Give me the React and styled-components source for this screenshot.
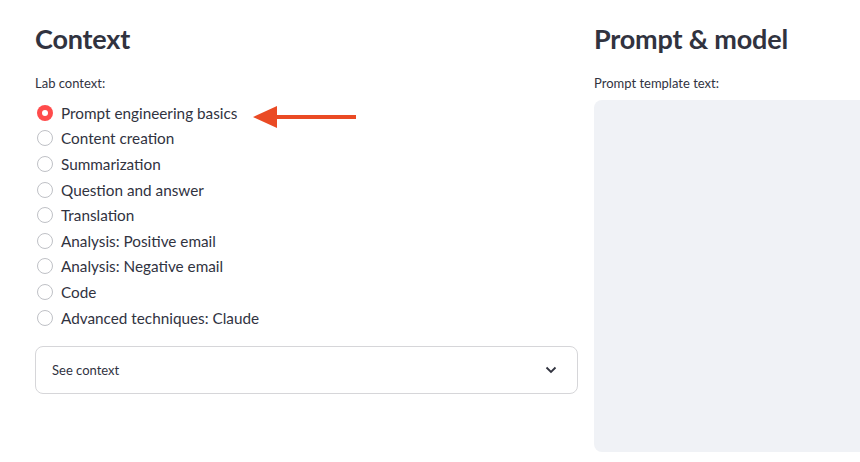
import styled, { createGlobalStyle } from 'styled-components';
import { useState } from 'react';

const GlobalStyle = createGlobalStyle`
  * {
    box-sizing: border-box;
  }
  body {
    margin: 0;
    background: #ffffff;
    font-family: Lato, 'Liberation Sans', sans-serif;
    color: #31333f;
  }
`;

const Page = styled.div`
  position: relative;
  display: grid;
  grid-template-columns: 543px 1fr;
  column-gap: 16px;
  padding: 0 0 10px 35px;
  width: 860px;
  height: 462px;
  overflow: hidden;
`;

const Column = styled.div`
  display: flex;
  flex-direction: column;
  min-width: 0;
`;

const Heading = styled.h2`
  margin: 0;
  padding: 22px 0 0;
  height: 75px;
  font-size: 27px;
  font-weight: 700;
  letter-spacing: -0.2px;
  color: #31333f;
`;

const Label = styled.div`
  font-size: 13px;
  line-height: 16px;
  color: #31333f;
  margin-bottom: 9px;
`;

const RadioList = styled.div`
  display: flex;
  flex-direction: column;
`;

const RadioRow = styled.label`
  display: flex;
  align-items: center;
  gap: 8px;
  height: 25.6px;
  padding-left: 2px;
  font-size: 15.3px;
  color: #31333f;
  cursor: pointer;
`;

const RadioDot = styled.span`
  width: 16px;
  height: 16px;
  border-radius: 50%;
  flex-shrink: 0;
  display: flex;
  align-items: center;
  justify-content: center;
  border: ${({ $checked }) => ($checked ? 'none' : '1px solid #bfc1c6')};
  background: ${({ $checked }) => ($checked ? '#ff4b4b' : '#ffffff')};
  &::after {
    content: '';
    display: ${({ $checked }) => ($checked ? 'block' : 'none')};
    width: 6px;
    height: 6px;
    border-radius: 50%;
    background: #ffffff;
  }
`;

const Expander = styled.div`
  margin-top: 16px;
  height: 48px;
  border: 1px solid #d6d6d9;
  border-radius: 8px;
  display: flex;
  align-items: center;
  justify-content: space-between;
  padding: 0 20px 0 16px;
  font-size: 13px;
  color: #31333f;
`;

const TemplateArea = styled.div`
  flex: 1;
  background: #f0f2f6;
  border-radius: 8px 0 0 8px;
`;

const Arrow = styled.svg`
  position: absolute;
  left: 252px;
  top: 105px;
`;

const options = [
  'Prompt engineering basics',
  'Content creation',
  'Summarization',
  'Question and answer',
  'Translation',
  'Analysis: Positive email',
  'Analysis: Negative email',
  'Code',
  'Advanced techniques: Claude',
];

const App = () => {
  const [selected, setSelected] = useState(0);

  return (
    <>
      <GlobalStyle />
      <Page>
        <Column>
          <Heading>Context</Heading>
          <Label>Lab context:</Label>
          <RadioList>
            {options.map((el, idx) => (
              <RadioRow key={el} onClick={() => setSelected(idx)}>
                <RadioDot $checked={selected === idx} />
                {el}
              </RadioRow>
            ))}
          </RadioList>
          <Expander>
            <span>See context</span>
            <svg width="12" height="8" viewBox="0 0 12 8" fill="none">
              <path d="M1.5 1.5 L6 6 L10.5 1.5" stroke="#31333f" strokeWidth="1.8" />
            </svg>
          </Expander>
        </Column>
        <Column>
          <Heading>Prompt &amp; model</Heading>
          <Label>Prompt template text:</Label>
          <TemplateArea />
        </Column>
        <Arrow width="106" height="25" viewBox="0 0 106 25">
          <path d="M1 12 L25 1 L25 23 Z" fill="#ea4a24" />
          <rect x="24" y="10" width="80" height="4" fill="#ea4a24" />
        </Arrow>
      </Page>
    </>
  );
};

export default App;
